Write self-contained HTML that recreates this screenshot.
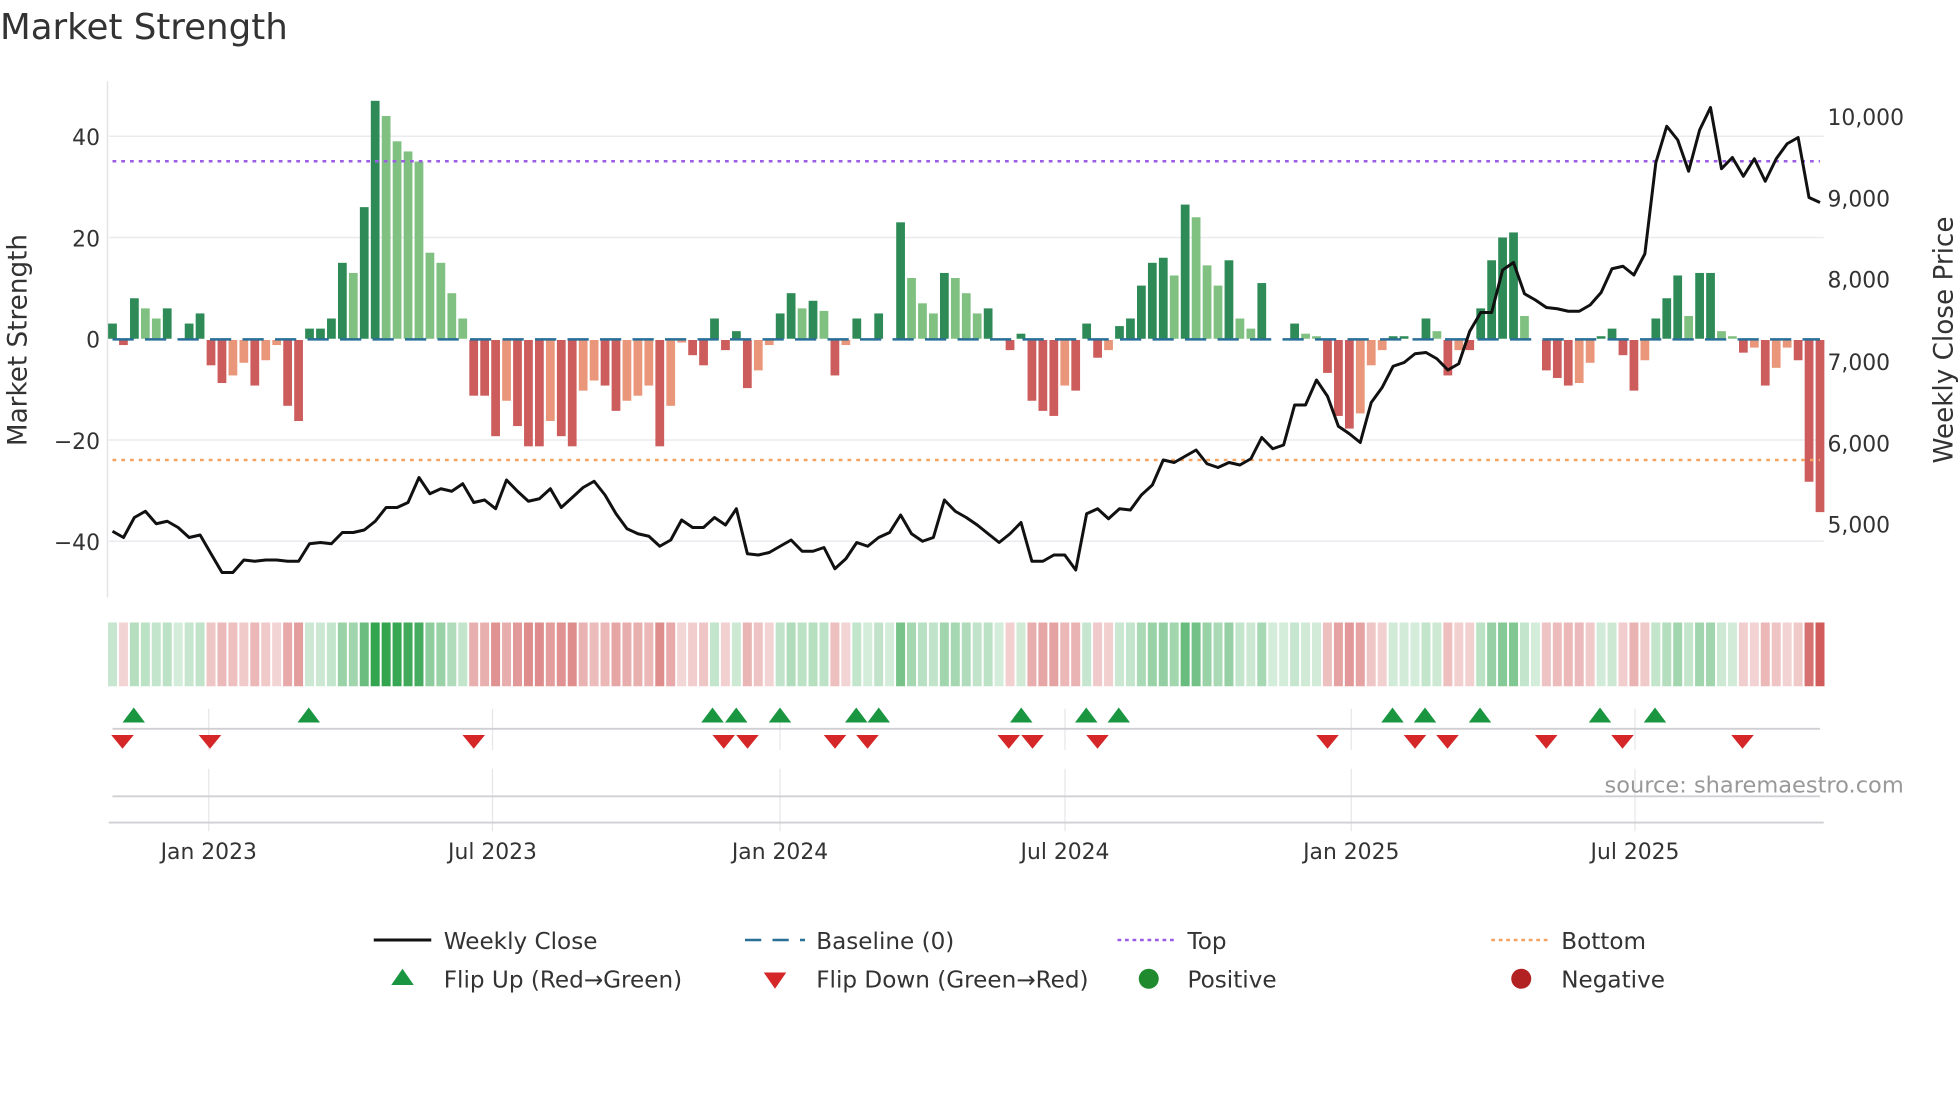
<!DOCTYPE html>
<html><head><meta charset="utf-8"><style>
html,body{margin:0;padding:0;background:#fff;}
svg{display:block;font-family:"DejaVu Sans","Liberation Sans",sans-serif;}
</style></head><body>
<svg id="s" width="1960" height="1102" viewBox="0 0 1568 881.6" xmlns="http://www.w3.org/2000/svg">
<rect width="1568" height="882" fill="#fff"/>
<text x="0" y="31" font-size="28.5" fill="#333">Market Strength</text>
<g stroke="#ebebef" stroke-width="1.2">
<line x1="87" x2="1459" y1="109" y2="109"/><line x1="87" x2="1459" y1="190" y2="190"/>
<line x1="87" x2="1459" y1="352" y2="352"/><line x1="87" x2="1459" y1="433" y2="433"/>
</g>
<line x1="86" x2="86" y1="65" y2="478" stroke="#e4e4e8" stroke-width="1.2"/>
<g font-size="17.5" fill="#333" text-anchor="end">
<text x="80" y="116">40</text><text x="80" y="197">20</text><text x="80" y="278">0</text>
<text x="80" y="359">−20</text><text x="80" y="440">−40</text>
</g>
<g font-size="17.5" fill="#333">
<text x="1462" y="100">10,000</text><text x="1462" y="165">9,000</text><text x="1462" y="230">8,000</text>
<text x="1462" y="296">7,000</text><text x="1462" y="361">6,000</text><text x="1462" y="426">5,000</text>
</g>
<text transform="translate(21,272) rotate(-90)" font-size="21" fill="#333" text-anchor="middle">Market Strength</text>
<text transform="translate(1562,272) rotate(-90)" font-size="21" fill="#333" text-anchor="middle">Weekly Close Price</text>
<g id="bars"></g>
<line x1="90" x2="1456" y1="271.5" y2="271.5" stroke="#2a6f97" stroke-width="2" stroke-dasharray="17 9"/>
<line x1="90" x2="1456" y1="129" y2="129" stroke="#9b5de5" stroke-width="2" stroke-dasharray="3 4"/>
<line x1="90" x2="1456" y1="368" y2="368" stroke="#f4a261" stroke-width="2" stroke-dasharray="3 4"/>
<polyline id="price" fill="none" stroke="#111" stroke-width="2.4" stroke-linejoin="round"/>
<g id="heat"></g>
<g stroke="#e6e6ea" stroke-width="1">
<line x1="167" x2="167" y1="567" y2="600"/><line x1="394" x2="394" y1="567" y2="600"/><line x1="624" x2="624" y1="567" y2="600"/><line x1="852" x2="852" y1="567" y2="600"/><line x1="1081" x2="1081" y1="567" y2="600"/><line x1="1308" x2="1308" y1="567" y2="600"/>
<line x1="167" x2="167" y1="615" y2="665"/><line x1="394" x2="394" y1="615" y2="665"/><line x1="624" x2="624" y1="615" y2="665"/><line x1="852" x2="852" y1="615" y2="665"/><line x1="1081" x2="1081" y1="615" y2="665"/><line x1="1308" x2="1308" y1="615" y2="665"/>
</g>
<line x1="90" x2="1456" y1="583" y2="583" stroke="#d0d0d4" stroke-width="1.5"/>
<line x1="90" x2="1456" y1="637" y2="637" stroke="#d0d0d4" stroke-width="1.5"/>
<line x1="87" x2="1459" y1="658" y2="658" stroke="#d0d0d4" stroke-width="1.5"/>
<g id="flips"></g>
<text x="1523" y="634" font-size="18" fill="#999" text-anchor="end">source: sharemaestro.com</text>
<g font-size="17.5" fill="#333" text-anchor="middle">
<text x="167" y="687">Jan 2023</text><text x="394" y="687">Jul 2023</text><text x="624" y="687">Jan 2024</text>
<text x="852" y="687">Jul 2024</text><text x="1081" y="687">Jan 2025</text><text x="1308" y="687">Jul 2025</text>
</g>
<g font-size="18.5" fill="#333">
<line x1="299" x2="345" y1="752" y2="752" stroke="#111" stroke-width="2.4"/><text x="355" y="759">Weekly Close</text>
<line x1="596" x2="644" y1="752" y2="752" stroke="#2a6f97" stroke-width="2" stroke-dasharray="13 9"/><text x="653" y="759">Baseline (0)</text>
<line x1="894" x2="940" y1="752" y2="752" stroke="#9b5de5" stroke-width="2" stroke-dasharray="3 3"/><text x="950" y="759">Top</text>
<line x1="1193" x2="1239" y1="752" y2="752" stroke="#f4a261" stroke-width="2" stroke-dasharray="3 3"/><text x="1249" y="759">Bottom</text>
<polygon points="313,788 322,775 331,788" fill="#1a9641"/><text x="355" y="790">Flip Up (Red→Green)</text>
<polygon points="611,778 620,791 629,778" fill="#d62728"/><text x="653" y="790">Flip Down (Green→Red)</text>
<circle cx="919" cy="783" r="8" fill="#1f8a2e"/><text x="950" y="790">Positive</text>
<circle cx="1217" cy="783" r="8" fill="#b22222"/><text x="1249" y="790">Negative</text>
</g>
</svg>
<script>
var v=[3,-1,8,6,4,6,0,3,5,-5,-8.5,-7,-4.5,-9,-4,-1,-13,-16,2,2,4,15,13,26,47,44,39,37,35,17,15,9,4,-11,-11,-19,-12,-17,-21,-21,-16,-19,-21,-10,-8,-9,-14,-12,-11,-9,-21,-13,-0.5,-3,-5,4,-2,1.5,-9.5,-6,-1,5,9,6,7.5,5.5,-7,-1,4,0,5,0,23,12,7,5,13,12,9,5,6,0,-2,1,-12,-14,-15,-9,-10,3,-3.5,-2,2.5,4,10.5,15,16,12.5,26.5,24,14.5,10.5,15.5,4,2,11,0,0,3,1,0.5,-6.5,-15,-17.5,-14.5,-5,-2,0.5,0.5,0,4,1.5,-7,-2,-2,6,15.5,20,21,4.5,0,-6,-7.5,-9,-8.5,-4.5,0.5,2,-3,-10,-4,4,8,12.5,4.5,13,13,1.5,0.5,-2.5,-1.5,-9,-5.5,-1.5,-4,-28,-34];
var p=[425,430,414,409,419,417,422,430,428,443,458,458,448,449,448,448,449,449,435,434,435,426,426,424,417,406,406,402,382,395,391,393,387,402,400,407,384,393,401,399,391,406,398,390,385,396,411,423,427,429,437,432,416,422,422,414,420,407,443,444,442,437,432,441,441,438,455,447,434,437,430,426,412,427,433,430,400,409,414,420,427,434,427,418,449,449,444,444,456,411,407,415,407,408,396,388,368,370,365,360,371,374,370,372,367,350,359,356,324,324,304,317,341,347,354,322,310,293,290,283,282,287,296,291,265,250,250,216,210,235,240,246,247,249,249,244,234,215,213,220,203,130,101,112,137,104,86,135,126,141,127,145,127,115,110,158,162];
var NS="http://www.w3.org/2000/svg",n=v.length,st=(1456-90)/(n-1);
function X(i){return 90+i*st;}
function el(t,a,par){var e=document.createElementNS(NS,t);for(var k in a)e.setAttribute(k,a[k]);document.getElementById(par).appendChild(e);}
for(var i=0;i<n;i++){var x=X(i),val=v[i],pr=i?v[i-1]:0,c;
 if(val>=0)c=(val>=pr)?"#2e8b57":"#80c080";else c=(val<=pr)?"#cd5c5c":"#e9967a";
 var h=Math.abs(val)*4.05;
 if(h>0.5)el("rect",{x:x-3.5,y:val>=0?271-h:272,width:7,height:h,fill:c},"bars");
 var a=Math.min(1,Math.abs(val)/40)*0.75+0.2,hc;
 if(val>=0)hc="rgba(40,160,70,"+a.toFixed(2)+")";else hc="rgba(200,60,60,"+a.toFixed(2)+")";
 el("rect",{x:x-3.6,y:498,width:7.2,height:51,fill:hc},"heat");
}
document.getElementById("price").setAttribute("points",p.map(function(y,i){return X(i).toFixed(1)+","+y;}).join(" "));
[107,247,570,589,624,685,703,817,869,895,1114,1140,1184,1280,1324].forEach(function(x){el("polygon",{points:(x-9)+",578 "+x+",566 "+(x+9)+",578",fill:"#1a9641"},"flips");});
[98,168,379,579,598,668,694,807,826,878,1062,1132,1158,1237,1298,1394].forEach(function(x){el("polygon",{points:(x-9)+",588 "+x+",599 "+(x+9)+",588",fill:"#d62728"},"flips");});
</script>
</body></html>
